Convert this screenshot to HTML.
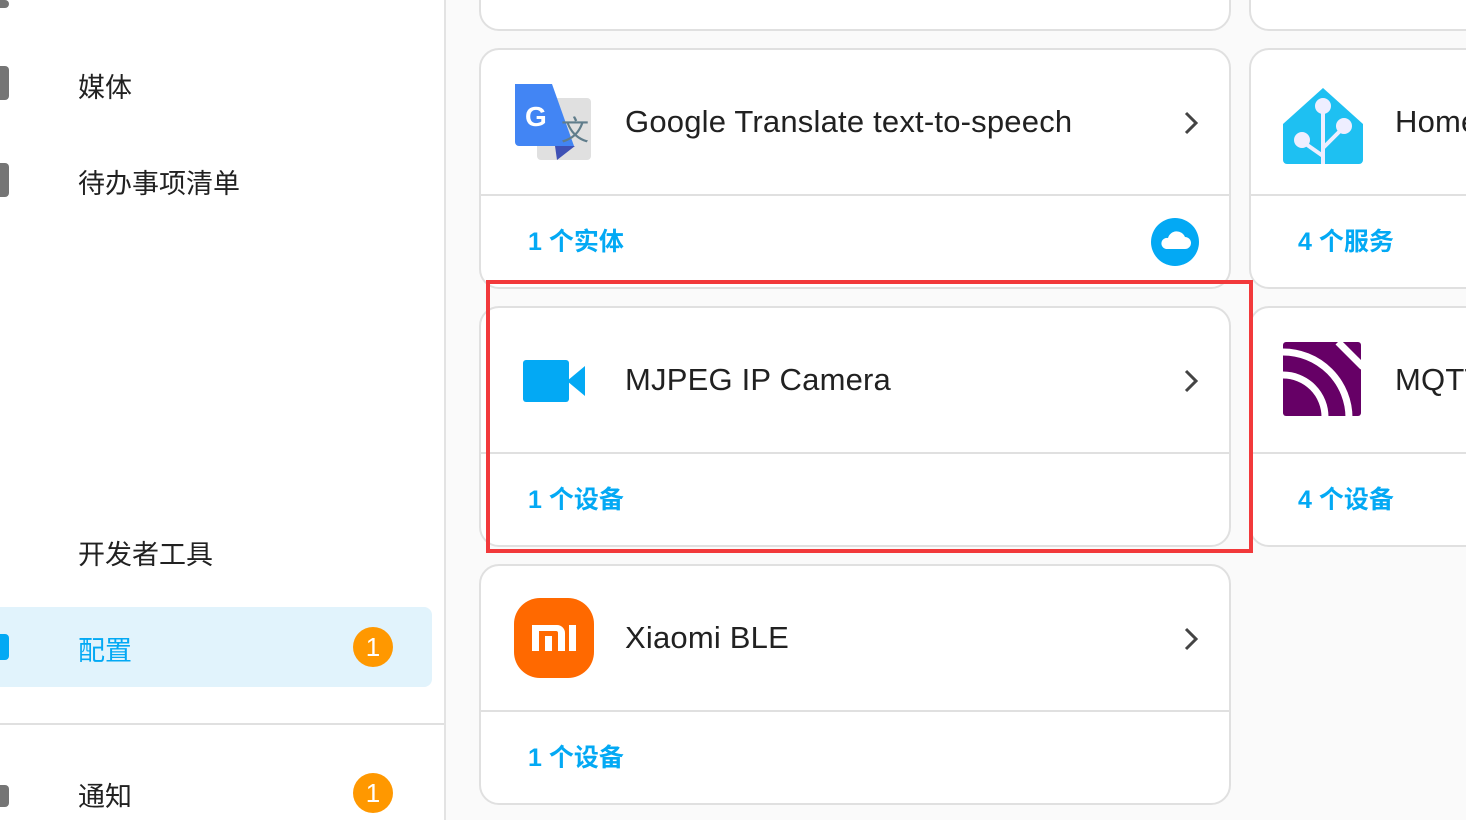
<!DOCTYPE html><html><head><meta charset="utf-8"><style>
body{margin:0;width:1466px;height:820px;overflow:hidden;background:#fafafa;font-family:"Liberation Sans","Noto Sans CJK SC",sans-serif;position:relative}
.side{position:absolute;left:0;top:0;width:444px;height:820px;background:#fff;border-right:2px solid #e3e3e3}
.it{position:absolute;left:78px;font-size:27px;color:#212121}
.ic{position:absolute;left:0;width:9px;background:#757575;border-radius:0 4px 4px 0}
.badge{position:absolute;left:353px;width:40px;height:40px;border-radius:50%;background:#ff9800;color:#fff;font-size:26px;text-align:center;line-height:40px}
.card{position:absolute;background:#fff;border:2px solid #e0e0e0;border-radius:20px;box-sizing:border-box;overflow:hidden}
.card .div{position:absolute;left:0;right:0;top:144px;border-top:2px solid #e0e0e0}
.title{position:absolute;left:144px;top:54px;font-size:31px;color:#212121;letter-spacing:0.2px}
.foot{position:absolute;left:47px;top:172px;font-size:25px;color:#03a9f4;font-weight:bold}
.chev{position:absolute;right:30px;top:60px}
</style></head><body>
<div class="side">
<div class="ic" style="top:0;height:8px"></div>
<div class="ic" style="top:66px;height:34px"></div><div class="it" style="top:66px">媒体</div>
<div class="ic" style="top:163px;height:34px"></div><div class="it" style="top:162px">待办事项清单</div>
<div class="it" style="top:533px">开发者工具</div>
<div style="position:absolute;left:0;top:607px;width:432px;height:80px;background:#e1f3fc;border-radius:0 8px 8px 0"></div>
<div class="ic" style="top:634px;height:26px;background:#03a9f4"></div>
<div class="it" style="top:629px;color:#03a9f4">配置</div><div class="badge" style="top:627px">1</div>
<div style="position:absolute;left:0;top:723px;width:444px;border-top:2px solid #e0e0e0"></div>
<div class="ic" style="top:785px;height:22px"></div>
<div class="it" style="top:775px">通知</div><div class="badge" style="top:773px">1</div>
</div>
<div class="card" style="left:479px;top:-40px;width:752px;height:71px"></div>
<div class="card" style="left:1249px;top:-40px;width:240px;height:71px"></div>

<div class="card" style="left:479px;top:48px;width:752px;height:241px">
<svg style="position:absolute;left:34px;top:34px" width="78" height="78" viewBox="0 0 78 78"><rect x="22" y="14" width="54" height="62" rx="4" fill="#e0e0e0"/><path d="M0 0h37l22 62H4a4 4 0 0 1-4-4z" fill="#4285f4"/><path d="M40 62h20l-18 14z" fill="#3f51b5"/><text x="10" y="42" font-size="28" font-weight="bold" fill="#fff" font-family="Liberation Sans">G</text><text x="46" y="56" font-size="28" fill="#607d8b" font-family="Noto Sans CJK SC">文</text></svg>
<div class="title">Google Translate text-to-speech</div>
<svg class="chev" width="16" height="26" viewBox="0 0 16 26"><path d="M3 3l10 10-10 10" stroke="#444" stroke-width="3" fill="none"/></svg>
<div class="div"></div><div class="foot">1 个实体</div>
<div style="position:absolute;left:670px;top:168px;width:48px;height:48px;border-radius:50%;background:#03a9f4"><svg width="48" height="48" viewBox="0 0 48 48"><path d="M15 31h19a6 6 0 0 0 0-12 9 9 0 0 0-17 1 5.5 5.5 0 0 0-2 11z" fill="#fff"/></svg></div>
</div>
<div class="card" style="left:1249px;top:48px;width:240px;height:241px">
<svg style="position:absolute;left:32px;top:34px" width="80" height="80" viewBox="0 0 80 80"><path d="M0 40L40 4 80 40v36a4 4 0 0 1-4 4H4a4 4 0 0 1-4-4z" fill="#1ec0f2"/><g stroke="#eef" stroke-width="4" fill="#eef"><path d="M40 24v56M40 64l20-20M40 72L20 58"/><circle cx="40" cy="22" r="6"/><circle cx="61" cy="42" r="6"/><circle cx="19" cy="56" r="6"/></g></svg>
<div class="title" style="left:144px">Home</div>
<div class="div"></div><div class="foot">4 个服务</div></div>

<div class="card" style="left:479px;top:306px;width:752px;height:241px">
<svg style="position:absolute;left:42px;top:52px" width="62" height="42" viewBox="0 0 62 42"><rect width="46" height="42" rx="3" fill="#03a9f4"/><path d="M44 21L62 6v30z" fill="#03a9f4"/></svg>
<div class="title">MJPEG IP Camera</div>
<svg class="chev" width="16" height="26" viewBox="0 0 16 26"><path d="M3 3l10 10-10 10" stroke="#444" stroke-width="3" fill="none"/></svg>
<div class="div"></div><div class="foot">1 个设备</div></div>
<div class="card" style="left:1249px;top:306px;width:240px;height:241px">
<svg style="position:absolute;left:32px;top:34px" width="80" height="76" viewBox="0 0 80 76"><rect width="78" height="74" rx="3" fill="#660066"/><g fill="none" stroke="#fff" stroke-width="7"><path d="M0 10a66 66 0 0 1 66 66"/><path d="M0 33a42 42 0 0 1 42 42"/><path d="M55 0l25 25"/></g></svg>
<div class="title" style="left:144px">MQTT</div>
<div class="div"></div><div class="foot">4 个设备</div></div>

<div class="card" style="left:479px;top:564px;width:752px;height:241px">
<div style="position:absolute;left:33px;top:32px;width:80px;height:80px;border-radius:26px;background:#ff6900"><svg width="80" height="80" viewBox="0 0 80 80"><g fill="#fff"><path d="M18 27h25a8 8 0 0 1 8 8v18h-7V35a2 2 0 0 0-2-2H25v20h-7z"/><rect x="31" y="38" width="7" height="15"/><rect x="55" y="27" width="7" height="26"/></g></svg></div>
<div class="title">Xiaomi BLE</div>
<svg class="chev" width="16" height="26" viewBox="0 0 16 26"><path d="M3 3l10 10-10 10" stroke="#444" stroke-width="3" fill="none"/></svg>
<div class="div"></div><div class="foot">1 个设备</div></div>

<div style="position:absolute;left:486px;top:280px;width:767px;height:273px;border:4px solid #f2393b;box-sizing:border-box"></div>
</body></html>
